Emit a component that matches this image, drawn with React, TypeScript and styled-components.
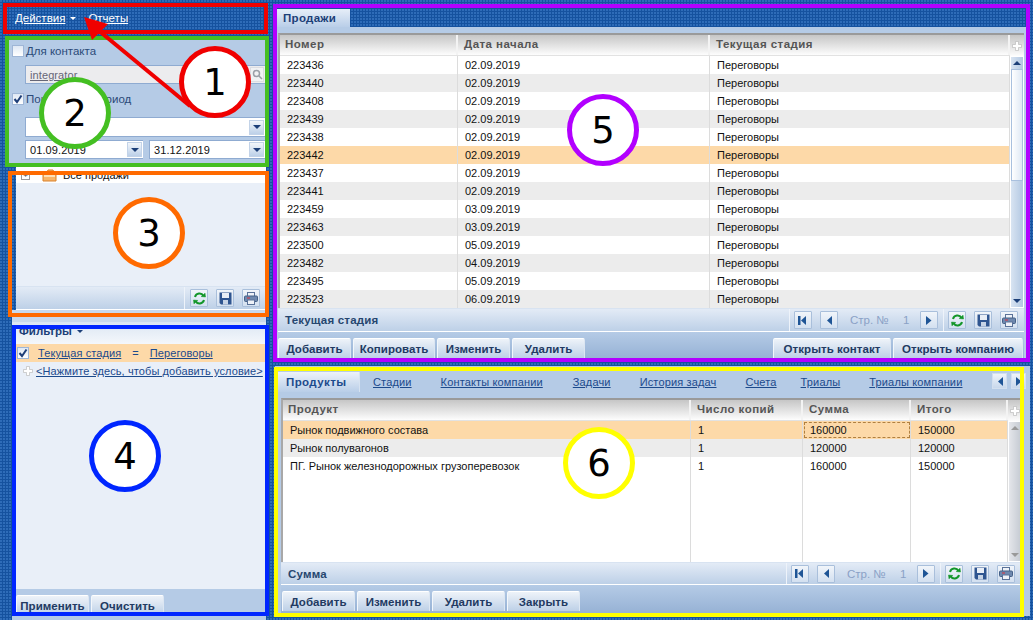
import React from 'react';
import styled, { createGlobalStyle } from 'styled-components';

const Global = createGlobalStyle`
  html, body { margin: 0; padding: 0; width: 1033px; height: 620px; overflow: hidden; }
  * { box-sizing: border-box; }
  body { font-family: "Liberation Sans", Arial, sans-serif; font-size: 11px; color: #111; }
`;

const Page = styled.div`
  position: relative;
  width: 1033px;
  height: 620px;
  display: flex;
  overflow: hidden;
  background-color: #15529f;
  background-image: radial-gradient(circle at 1px 1px, #2e6cb8 0.8px, transparent 1px);
  background-size: 3px 3px;
`;

const LeftColumn = styled.div`
  width: 260px;
  margin-left: 6px;
  height: 620px;
  display: flex;
  flex-direction: column;
`;

const TopMenu = styled.div`
  height: 36px;
  display: flex;
  align-items: flex-start;
  gap: 12px;
  padding: 12px 0 0 9px;
`;

const MenuLink = styled.a`
  color: #fff;
  text-decoration: underline;
  font-size: 11.5px;
  line-height: 13px;
  display: flex;
  align-items: center;
`;

const Caret = styled.span<{ $color?: string }>`
  display: inline-block;
  margin-left: 5px;
  border-left: 3px solid transparent;
  border-right: 3px solid transparent;
  border-top: 3px solid ${p => p.$color || '#fff'};
`;

const FormPanel = styled.div`
  height: 131px;
  background: #b5cbe6;
  padding: 8px 0 0 6px;
  display: flex;
  flex-direction: column;
`;

const CheckRow = styled.div<{ $mt?: number }>`
  display: flex;
  align-items: center;
  height: 13px;
  gap: 2px;
  margin-top: ${p => p.$mt || 0}px;
  color: #2b4a78;
  font-size: 11.5px;
`;

const CheckBox = styled.span<{ $checked?: boolean }>`
  width: 12px;
  height: 12px;
  flex: none;
  border: 1px solid #9fb6d6;
  background: linear-gradient(#dfe8f4, #fff);
  display: flex;
  align-items: center;
  justify-content: center;
`;

const Field = styled.div<{ $w: number; $h?: number; $mt?: number; $ml?: number; $muted?: boolean }>`
  width: ${p => p.$w}px;
  height: ${p => p.$h || 19}px;
  margin-top: ${p => p.$mt || 0}px;
  margin-left: ${p => p.$ml ?? 0}px;
  flex: none;
  border: 1px solid #8fabd1;
  border-right: none;
  background: ${p => (p.$muted ? '#ececee' : '#fff')};
  display: flex;
  align-items: center;
  justify-content: space-between;
  padding-left: 4px;
  font-size: 11px;
  letter-spacing: 0.1px;
`;

const DimLink = styled.span`
  color: #667;
  text-decoration: underline;
`;

const DropButton = styled.span`
  width: 15px;
  height: 15px;
  margin-right: 1px;
  flex: none;
  border: 1px solid #c3d3e8;
  background: linear-gradient(#f2f6fb, #bcd0e8);
  display: flex;
  align-items: center;
  justify-content: center;
  &::after {
    content: '';
    border-left: 4px solid transparent;
    border-right: 4px solid transparent;
    border-top: 4px solid #1c3f78;
  }
`;

const SearchButton = styled.span`
  width: 14px;
  height: 15px;
  margin-right: 1px;
  flex: none;
  border: 1px solid #dcdde2;
  background: #f1f2f4;
  display: flex;
  align-items: center;
  justify-content: center;
`;

const DateRow = styled.div`
  display: flex;
  gap: 6px;
  margin: 3px 0 0 13px;
`;

const TreePanel = styled.div`
  height: 143px;
  margin-left: 10px;
  background: #e9eff8;
  display: flex;
  flex-direction: column;
`;

const TreeRow = styled.div`
  height: 16px;
  background: #fff;
  display: flex;
  align-items: center;
  padding-left: 5px;
  gap: 6px;
  font-size: 11px;
`;

const Expander = styled.span`
  width: 9px;
  height: 9px;
  margin-right: 6px;
  border: 1px solid #999;
  font-size: 8px;
  line-height: 7px;
  text-align: center;
  color: #444;
`;

const TreeBody = styled.div`
  flex: 1;
`;

const ToolStrip = styled.div<{ $h?: number }>`
  height: ${p => p.$h || 24}px;
  background: linear-gradient(#e3ebf6, #bdd0e7);
  border-top: 1px solid #d8e3f1;
  border-bottom: 1px solid #fff;
  display: flex;
  align-items: center;
  flex: none;
`;

const ToolTitle = styled.div`
  flex: 1;
  padding-left: 7px;
  color: #26466f;
  font-weight: bold;
  font-size: 11.5px;
  letter-spacing: 0.2px;
`;

const ToolSep = styled.span`
  width: 1px;
  align-self: stretch;
  background: #eef3fa;
`;

const ToolButton = styled.span<{ $ml?: number }>`
  width: 18px;
  height: 18px;
  margin-left: ${p => p.$ml ?? 8}px;
  flex: none;
  border: 1px solid #a9bfdb;
  border-radius: 1px;
  background: linear-gradient(#f1f5fa, #d3e0f0);
  display: flex;
  align-items: center;
  justify-content: center;
`;

const PagerText = styled.span<{ $ml: number; $w?: number }>`
  margin-left: ${p => p.$ml}px;
  width: ${p => (p.$w ? `${p.$w}px` : 'auto')};
  color: #8aa1c6;
  font-size: 11.5px;
`;

const PagerEnd = styled.span`
  width: 5px;
  flex: none;
`;

const EdgeGap = styled.span<{ $w: number }>`
  width: ${p => p.$w}px;
  flex: none;
`;

const Splitter = styled.div`
  height: 12px;
  margin-left: 6px;
  background: #c9d9ec;
`;

const FilterPanel = styled.div`
  margin-left: 6px;
  flex: 1;
  background: #b5cbe6;
  display: flex;
  flex-direction: column;
  padding-bottom: 5px;
`;

const FilterHead = styled.div`
  height: 22px;
  background: linear-gradient(#dbe6f3, #f4f7fb);
  color: #1c3f78;
  font-weight: bold;
  padding: 0 0 4px 7px;
  font-size: 11.5px;
  display: flex;
  align-items: center;
`;

const FilterBody = styled.div`
  height: 245px;
  background: #e9eff8;
`;

const ConditionRow = styled.div`
  height: 18px;
  background: #fdd9a8;
  display: flex;
  align-items: center;
  padding-left: 5px;
`;

const CondLink = styled.a<{ $ml?: number }>`
  margin-left: ${p => p.$ml || 0}px;
  color: #1c4a8c;
  text-decoration: underline;
  font-size: 11px;
  letter-spacing: 0.1px;
  white-space: nowrap;
`;

const CondEq = styled.span`
  margin-left: 11px;
  color: #1c4a8c;
`;

const AddRow = styled.div`
  height: 18px;
  display: flex;
  align-items: center;
  padding-left: 11px;
  gap: 3px;
`;

const ButtonBar = styled.div<{ $h: number; $pl: number; $pt: number; $tinted?: boolean }>`
  height: ${p => p.$h}px;
  display: flex;
  gap: 2px;
  padding: ${p => p.$pt}px 1px 0 ${p => p.$pl}px;
  flex: none;
  ${p => (p.$tinted ? 'background: linear-gradient(#b5cbe6, #93afd3);' : '')}
`;

const ActionButton = styled.button<{ $w: number }>`
  width: ${p => p.$w}px;
  height: 20px;
  padding: 0;
  border: none;
  border-top: 1px solid #fff;
  border-left: 1px solid #f3f7fb;
  border-right: 1px solid #dce6f2;
  border-radius: 2px 2px 0 0;
  background: linear-gradient(#eef3f9, #bdd0e7);
  color: #223a62;
  font-family: "Liberation Sans", Arial, sans-serif;
  font-weight: bold;
  font-size: 11.5px;
  letter-spacing: 0.05px;
  flex: none;
`;

const Spacer = styled.div`
  flex: 1;
`;

const RightColumn = styled.div`
  width: 755px;
  margin-left: 9px;
  height: 620px;
  display: flex;
  flex-direction: column;
`;

const TopTabs = styled.div`
  height: 27px;
  padding: 9px 0 0 2px;
  display: flex;
`;

const TopTab = styled.div`
  width: 73px;
  height: 18px;
  background: linear-gradient(#e6eef8, #b9cee8);
  color: #1c3f78;
  font-weight: bold;
  font-size: 11.5px;
  letter-spacing: 0.3px;
  padding: 3px 0 0 6px;
`;

const SalesPanel = styled.section`
  height: 334px;
  background: #b5cbe6;
  padding: 6px 6px 0 3px;
  display: flex;
  flex-direction: column;
`;

const DetailPanel = styled.section`
  height: 250px;
  margin-top: 5px;
  background: #b5cbe6;
  display: flex;
  flex-direction: column;
  padding: 0 9px 0 6px;
`;

const GridFrame = styled.div`
  flex: 1;
  min-height: 0;
  display: flex;
  border-top: 2px solid #9a9a9a;
  border-left: 2px solid #a8a8a8;
  background: #fff;
`;

const GridMain = styled.div`
  flex: 1;
  min-width: 0;
  overflow: hidden;
  position: relative;
`;

const HeaderRow = styled.div<{ $cols: string }>`
  display: grid;
  grid-template-columns: ${p => p.$cols};
  height: 21px;
  background: linear-gradient(#c6c6c6, #fdfdfd);
  border-bottom: 1px solid #e2e2e2;
`;

const HeaderCell = styled.div`
  padding: 3px 0 0 6px;
  border-right: 2px solid #f3f3f3;
  color: #555;
  font-weight: bold;
  font-size: 11.5px;
  letter-spacing: 0.45px;
  &:first-child { padding-left: 5px; }
`;

const DataRow = styled.div<{ $cols: string; $tone: 'white' | 'grey' | 'active' }>`
  display: grid;
  grid-template-columns: ${p => p.$cols};
  height: 18px;
  background: ${p => (p.$tone === 'active' ? '#fdd9a8' : p.$tone === 'grey' ? '#ececec' : '#fff')};
`;

const DataCell = styled.div<{ $focus?: boolean }>`
  padding: 3px 0 0 7px;
  border-right: 1px solid #dcdcdc;
  font-size: 11px;
  white-space: nowrap;
  ${p => (p.$focus ? 'outline: 1px dashed #b08040; outline-offset: -2px;' : '')}
`;

const ColumnLines = styled.div<{ $cols: string }>`
  position: absolute;
  left: 0;
  right: 0;
  top: 75px;
  bottom: 0;
  display: grid;
  grid-template-columns: ${p => p.$cols};
  div { border-right: 1px solid #dcdcdc; }
`;

const ScrollColumn = styled.div<{ $w: number }>`
  width: ${p => p.$w}px;
  flex: none;
  background: #fff;
  display: flex;
  flex-direction: column;
  padding-bottom: 1px;
`;

const PlusCell = styled.div`
  height: 21px;
  background: linear-gradient(#c6c6c6, #fdfdfd);
  display: flex;
  align-items: center;
  justify-content: center;
`;

const ScrollBar = styled.div<{ $disabled?: boolean }>`
  flex: 1;
  margin: 1px 1px 0 1px;
  display: flex;
  flex-direction: column;
  background: ${p => (p.$disabled ? 'linear-gradient(90deg,#e4e6ea,#c7ccd4)' : 'linear-gradient(90deg,#d8e4f2,#b3c8e2)')};
`;

const ScrollEnd = styled.div<{ $dir: 'up' | 'down'; $disabled?: boolean }>`
  height: 12px;
  flex: none;
  display: flex;
  align-items: center;
  justify-content: center;
  &::after {
    content: '';
    border-left: 4px solid transparent;
    border-right: 4px solid transparent;
    ${p => (p.$dir === 'up' ? 'border-bottom' : 'border-top')}: 4px solid ${p => (p.$disabled ? '#999' : '#1c3f78')};
  }
`;

const ScrollThumb = styled.div`
  height: 112px;
  flex: none;
  border: 1px solid #a9c0de;
  background: linear-gradient(90deg, #fff, #dfe8f4);
`;

const ScrollTrack = styled.div`
  flex: 1;
`;

const DetailTabs = styled.div`
  height: 32px;
  display: flex;
  align-items: flex-start;
  padding: 6px 0 0 0;
  margin-left: -4px;
`;

const ActiveTab = styled.div`
  width: 83px;
  height: 20px;
  background: linear-gradient(#edf2f9, #b9cee8);
  border-left: 1px solid #d6e2f0;
  border-right: 1px solid #d6e2f0;
  color: #1c4a8c;
  font-weight: bold;
  font-size: 11.5px;
  letter-spacing: 0.4px;
  padding: 4px 0 0 8px;
  flex: none;
`;

const TabLink = styled.a<{ $ml: number }>`
  margin: 4px 0 0 ${p => p.$ml}px;
  color: #1c4a8c;
  text-decoration: underline;
  font-size: 11px;
  letter-spacing: 0.15px;
  white-space: nowrap;
  flex: none;
`;

const TabScroll = styled.span<{ $ml: number }>`
  width: 15px;
  height: 16px;
  margin: 1px 0 0 ${p => p.$ml}px;
  flex: none;
  background: linear-gradient(#eef3f9, #c8d8ec);
  border: 1px solid #d2dfef;
  display: flex;
  align-items: center;
  justify-content: center;
`;

const GridWrap = styled.div`
  flex: 1;
  min-height: 0;
  display: flex;
`;

/* annotations drawn over the screenshot */
const Frame = styled.div<{ $x: number; $y: number; $w: number; $h: number; $c: string }>`
  position: absolute;
  left: ${p => p.$x}px;
  top: ${p => p.$y}px;
  width: ${p => p.$w}px;
  height: ${p => p.$h}px;
  border: 4px solid ${p => p.$c};
  pointer-events: none;
`;

const Marker = styled.div<{ $x: number; $y: number; $c: string }>`
  position: absolute;
  left: ${p => p.$x - 36}px;
  top: ${p => p.$y - 36}px;
  width: 72px;
  height: 72px;
  border-radius: 50%;
  border: 5px solid ${p => p.$c};
  background: #fff;
  color: #000;
  font-family: "DejaVu Sans", sans-serif;
  font-size: 37px;
  display: flex;
  align-items: center;
  justify-content: center;
`;

const ArrowLayer = styled.svg`
  position: absolute;
  left: 0;
  top: 0;
  pointer-events: none;
`;

const Check = () => (
  <svg width="10" height="10" viewBox="0 0 10 10">
    <path d="M1.5 5 L4 8 L8.5 1.5" fill="none" stroke="#1f3f78" strokeWidth="2" />
  </svg>
);

const Refresh = () => (
  <svg width="13" height="13" viewBox="0 0 13 13" fill="none" stroke="#13962a" strokeWidth="2">
    <path d="M2 5 A4.6 4.6 0 0 1 10.5 4" />
    <path d="M11 8 A4.6 4.6 0 0 1 2.5 9" />
    <path d="M8 4.5 L12.5 5 L12 1" fill="#13962a" strokeWidth="0.5" />
    <path d="M5 8.5 L0.5 8 L1 12" fill="#13962a" strokeWidth="0.5" />
  </svg>
);

const Save = () => (
  <svg width="13" height="13" viewBox="0 0 13 13">
    <path d="M0.5 0.5 H12.5 V12.5 H2 L0.5 11 Z" fill="#2f5590" />
    <rect x="3" y="1" width="7" height="5" fill="#e9eef6" />
    <rect x="4" y="8" width="5" height="4.5" fill="#c7d4e6" />
  </svg>
);

const Printer = () => (
  <svg width="14" height="13" viewBox="0 0 14 13">
    <rect x="3.5" y="0.5" width="7" height="4" fill="#eef2f8" stroke="#5a7299" />
    <rect x="0.5" y="4" width="13" height="5.5" rx="1" fill="#6e88ae" stroke="#456087" />
    <rect x="3.5" y="8" width="7" height="4.5" fill="#eef2f8" stroke="#5a7299" />
    <rect x="3" y="5.5" width="3" height="1" fill="#d9303a" />
  </svg>
);

const Tri = ({ dir, bar }: { dir: 'l' | 'r'; bar?: boolean }) => (
  <svg width="10" height="11" viewBox="0 0 10 11" fill="#1f5596">
    {dir === 'l' ? <path d="M8 1 V10 L3 5.5 Z" /> : <path d="M2 1 V10 L7.5 5.5 Z" />}
    {bar && <rect x="0" y="1" width="2.5" height="9" />}
  </svg>
);

const Plus = ({ color = '#fff' }: { color?: string }) => (
  <svg width="10" height="10" viewBox="0 0 10 10">
    <path d="M3.5 0.5 H6.5 V3.5 H9.5 V6.5 H6.5 V9.5 H3.5 V6.5 H0.5 V3.5 H3.5 Z" fill={color} stroke="#bbb" strokeWidth="0.7" />
  </svg>
);

const Folder = () => (
  <svg width="15" height="13" viewBox="0 0 15 13">
    <path d="M1 3 H5 L6 1 H11 L12 3 H14 V12 H1 Z" fill="#f7b56a" stroke="#d9812c" />
    <rect x="2" y="5" width="11" height="3" fill="#fde0b8" />
  </svg>
);

const Magnifier = () => (
  <svg width="11" height="11" viewBox="0 0 11 11" fill="none" stroke="#9aa0a8" strokeWidth="1.5">
    <circle cx="4.5" cy="4.5" r="3" />
    <path d="M7 7 L10 10" />
  </svg>
);

const PagerTools = () => (
  <>
    <ToolSep />
    <ToolButton $ml={4}><Tri dir="l" bar /></ToolButton>
    <ToolButton><Tri dir="l" /></ToolButton>
    <PagerText $ml={12} $w={53}>Стр. №</PagerText>
    <PagerText $ml={0} $w={17}>1</PagerText>
    <ToolButton $ml={0}><Tri dir="r" /></ToolButton>
    <PagerEnd />
    <ToolSep />
    <ToolButton $ml={4}><Refresh /></ToolButton>
    <ToolButton><Save /></ToolButton>
    <ToolButton><Printer /></ToolButton>
    <EdgeGap $w={6} />
  </>
);

const salesCols = '178px 252px 1fr';
const sales = [
  ['223436', '02.09.2019'], ['223440', '02.09.2019'], ['223408', '02.09.2019'],
  ['223439', '02.09.2019'], ['223438', '02.09.2019'], ['223442', '02.09.2019'],
  ['223437', '02.09.2019'], ['223441', '02.09.2019'], ['223459', '03.09.2019'],
  ['223463', '03.09.2019'], ['223500', '05.09.2019'], ['223482', '04.09.2019'],
  ['223495', '05.09.2019'], ['223523', '06.09.2019'],
];

const productCols = '408px 112px 108px 1fr';
const products = [
  ['Рынок подвижного состава', '1', '160000', '150000'],
  ['Рынок полувагонов', '1', '120000', '120000'],
  ['ПГ. Рынок железнодорожных грузоперевозок', '1', '160000', '150000'],
];

const frames = [
  { x: 3, y: 3, w: 265, h: 31, c: '#f00000' },
  { x: 5, y: 36, w: 264, h: 131, c: '#44bf22' },
  { x: 8, y: 171, w: 261, h: 146, c: '#ff6a00' },
  { x: 12, y: 325, w: 257, h: 291, c: '#0026ff' },
  { x: 273, y: 4, w: 757, h: 358, c: '#b200ff' },
  { x: 274, y: 367, w: 750, h: 250, c: '#ffff00' },
];

const markers = [
  { n: 1, x: 215, y: 82, c: '#f00000' },
  { n: 2, x: 75, y: 113, c: '#44bf22' },
  { n: 3, x: 149, y: 233, c: '#ff6a00' },
  { n: 4, x: 125, y: 456, c: '#0026ff' },
  { n: 5, x: 603, y: 130, c: '#b200ff' },
  { n: 6, x: 599, y: 463, c: '#ffff00' },
];

export default function App() {
  return (
    <Page>
      <Global />
      <LeftColumn>
        <TopMenu>
          <MenuLink>Действия<Caret /></MenuLink>
          <MenuLink>Отчеты</MenuLink>
        </TopMenu>
        <FormPanel>
          <CheckRow>
            <CheckBox />
            Для контакта
          </CheckRow>
          <Field $w={240} $h={19} $mt={8} $ml={13} $muted>
            <DimLink>integrator</DimLink>
            <SearchButton><Magnifier /></SearchButton>
          </Field>
          <CheckRow $mt={8}>
            <CheckBox><Check /></CheckBox>
            Показать за период
          </CheckRow>
          <Field $w={240} $h={20} $mt={12} $ml={13}>
            <span />
            <DropButton />
          </Field>
          <DateRow>
            <Field $w={118} $h={19}>01.09.2019<DropButton /></Field>
            <Field $w={116} $h={19}>31.12.2019<DropButton /></Field>
          </DateRow>
        </FormPanel>
        <TreePanel>
          <TreeRow>
            <Expander>+</Expander>
            <Folder />
            Все продажи
          </TreeRow>
          <TreeBody />
          <ToolStrip>
            <Spacer />
            <ToolSep />
            <ToolButton $ml={5}><Refresh /></ToolButton>
            <ToolButton><Save /></ToolButton>
            <ToolButton><Printer /></ToolButton>
            <EdgeGap $w={6} />
          </ToolStrip>
        </TreePanel>
        <Splitter />
        <FilterPanel>
          <FilterHead>Фильтры<Caret $color="#1c3f78" /></FilterHead>
          <FilterBody>
            <ConditionRow>
              <CheckBox><Check /></CheckBox>
              <CondLink $ml={9}>Текущая стадия</CondLink>
              <CondEq>=</CondEq>
              <CondLink $ml={11}>Переговоры</CondLink>
            </ConditionRow>
            <AddRow>
              <Plus />
              <CondLink>&lt;Нажмите здесь, чтобы добавить условие&gt;</CondLink>
            </AddRow>
          </FilterBody>
          <ButtonBar $h={25} $pl={4} $pt={6}>
            <ActionButton $w={73}>Применить</ActionButton>
            <ActionButton $w={73}>Очистить</ActionButton>
          </ButtonBar>
        </FilterPanel>
      </LeftColumn>

      <RightColumn>
        <TopTabs>
          <TopTab>Продажи</TopTab>
        </TopTabs>
        <SalesPanel>
          <GridFrame>
            <GridMain>
              <HeaderRow $cols={salesCols}>
                <HeaderCell>Номер</HeaderCell>
                <HeaderCell>Дата начала</HeaderCell>
                <HeaderCell>Текущая стадия</HeaderCell>
              </HeaderRow>
              {sales.map((r, i) => (
                <DataRow key={r[0]} $cols={salesCols} $tone={r[0] === '223442' ? 'active' : i % 2 ? 'grey' : 'white'}>
                  <DataCell>{r[0]}</DataCell>
                  <DataCell>{r[1]}</DataCell>
                  <DataCell>Переговоры</DataCell>
                </DataRow>
              ))}
            </GridMain>
            <ScrollColumn $w={14}>
              <PlusCell><Plus /></PlusCell>
              <ScrollBar>
                <ScrollEnd $dir="up" />
                <ScrollThumb />
                <ScrollTrack />
                <ScrollEnd $dir="down" />
              </ScrollBar>
            </ScrollColumn>
          </GridFrame>
          <ToolStrip>
            <ToolTitle>Текущая стадия</ToolTitle>
            <PagerTools />
          </ToolStrip>
          <ButtonBar $h={29} $pl={0} $pt={6} $tinted>
            <ActionButton $w={73}>Добавить</ActionButton>
            <ActionButton $w={82}>Копировать</ActionButton>
            <ActionButton $w={73}>Изменить</ActionButton>
            <ActionButton $w={73}>Удалить</ActionButton>
            <Spacer />
            <ActionButton $w={118}>Открыть контакт</ActionButton>
            <ActionButton $w={130}>Открыть компанию</ActionButton>
          </ButtonBar>
        </SalesPanel>
        <DetailPanel>
          <DetailTabs>
            <ActiveTab>Продукты</ActiveTab>
            <TabLink $ml={13}>Стадии</TabLink>
            <TabLink $ml={29}>Контакты компании</TabLink>
            <TabLink $ml={30}>Задачи</TabLink>
            <TabLink $ml={29}>История задач</TabLink>
            <TabLink $ml={29}>Счета</TabLink>
            <TabLink $ml={24}>Триалы</TabLink>
            <TabLink $ml={29}>Триалы компании</TabLink>
            <TabScroll $ml={30}><Tri dir="l" /></TabScroll>
            <TabScroll $ml={4}><Tri dir="r" /></TabScroll>
          </DetailTabs>
          <GridWrap>
            <GridFrame>
              <GridMain>
                <HeaderRow $cols={productCols}>
                  <HeaderCell>Продукт</HeaderCell>
                  <HeaderCell>Число копий</HeaderCell>
                  <HeaderCell>Сумма</HeaderCell>
                  <HeaderCell>Итого</HeaderCell>
                </HeaderRow>
                {products.map((r, i) => (
                  <DataRow key={r[0]} $cols={productCols} $tone={i === 0 ? 'active' : i === 1 ? 'grey' : 'white'}>
                    <DataCell>{r[0]}</DataCell>
                    <DataCell>{r[1]}</DataCell>
                    <DataCell $focus={i === 0}>{r[2]}</DataCell>
                    <DataCell>{r[3]}</DataCell>
                  </DataRow>
                ))}
                <ColumnLines $cols={productCols}>
                  <div /><div /><div /><div />
                </ColumnLines>
              </GridMain>
              <ScrollColumn $w={13}>
                <PlusCell><Plus /></PlusCell>
                <ScrollBar $disabled>
                  <ScrollEnd $dir="up" $disabled />
                  <ScrollTrack />
                  <ScrollEnd $dir="down" $disabled />
                </ScrollBar>
              </ScrollColumn>
            </GridFrame>
          </GridWrap>
          <ToolStrip $h={23}>
            <ToolTitle>Сумма</ToolTitle>
            <PagerTools />
          </ToolStrip>
          <ButtonBar $h={31} $pl={1} $pt={6} $tinted>
            <ActionButton $w={73}>Добавить</ActionButton>
            <ActionButton $w={73}>Изменить</ActionButton>
            <ActionButton $w={73}>Удалить</ActionButton>
            <ActionButton $w={73}>Закрыть</ActionButton>
          </ButtonBar>
        </DetailPanel>
      </RightColumn>

      {frames.map(f => (
        <Frame key={f.c} $x={f.x} $y={f.y} $w={f.w} $h={f.h} $c={f.c} />
      ))}
      <ArrowLayer width="1033" height="620" viewBox="0 0 1033 620">
        <path d="M190 106 L98 30" stroke="#f00000" strokeWidth="4" fill="none" />
        <path d="M84 17 L108 24 L92 40 Z" fill="#f00000" />
      </ArrowLayer>
      {markers.map(m => (
        <Marker key={m.n} $x={m.x} $y={m.y} $c={m.c}>{m.n}</Marker>
      ))}
    </Page>
  );
}
